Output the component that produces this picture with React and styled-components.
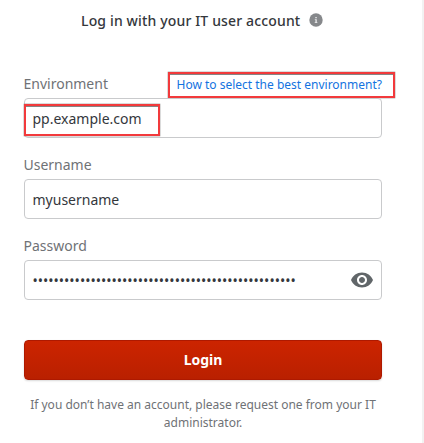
import React from "react";
import styled, { createGlobalStyle } from "styled-components";

const GlobalStyle = createGlobalStyle`
  *, *::before, *::after { box-sizing: border-box; }
  body { margin: 0; background: #fff; overflow: hidden; }
  body, input, button { font-family: "Noto Sans", sans-serif; }
`;

const Panel = styled.main`
  width: 424px;
  height: 443px;
  padding: 11px 40px 0 24px;
  border-right: 2px solid #f2f2f2;
  background: #fff;
`;

const Header = styled.header`
  display: flex;
  align-items: center;
  height: 20px;
  margin-bottom: 43px;
  padding-left: 57px;
  gap: 9px;
`;

const Title = styled.h1`
  margin: 0;
  color: #34373c;
  font-size: 14px;
  font-weight: 500;
  letter-spacing: 0.15px;
  line-height: 20px;
  white-space: nowrap;
`;

const InfoIcon = styled.svg`
  width: 14px;
  height: 14px;
  flex: none;
  margin-top: -2px;
`;

const Field = styled.div`
  width: 358px;
  margin-bottom: 17px;
`;

const FieldHead = styled.div`
  position: relative;
  height: 24px;
`;

const Label = styled.label`
  display: block;
  margin-left: -0.5px;
  color: #6f7276;
  font-size: 14px;
  line-height: 20px;
`;

const HelpLink = styled.a`
  position: absolute;
  top: -2px;
  left: 144px;
  width: 227px;
  height: 26px;
  padding-left: 6.5px;
  border: 2px solid #f23a3c;
  box-shadow: inset 0 1px 0 #858585, 0 0 0 0.3px #858585;
  color: #1373e0;
  font-size: 12px;
  line-height: 21px;
  text-decoration: none;
  white-space: nowrap;
`;

const InputBox = styled.div`
  position: relative;
  display: flex;
  align-items: center;
  height: 40px;
  padding: 0 7px 0 7.5px;
  border: 1px solid #c9cacc;
  border-radius: 4px;
  background: #fff;
`;

const Input = styled.input`
  flex: 1;
  min-width: 0;
  height: 36px;
  padding: 0;
  border: 0;
  outline: 0;
  background: transparent;
  color: #34373c;
  font-size: 14px;
`;

const Highlight = styled.span`
  position: absolute;
  top: 5px;
  left: -1px;
  width: 136px;
  height: 32px;
  border: 2px solid #f23a3c;
  box-shadow: inset 0 1px 0 #858585, 0 0 0 0.3px #858585;
  pointer-events: none;
`;

const EyeButton = styled.button`
  display: flex;
  flex: none;
  padding: 0;
  border: 0;
  background: transparent;
  color: #616669;
`;

const LoginButton = styled.button`
  display: block;
  width: 358px;
  height: 40px;
  margin-top: 40px;
  padding: 0 0 1px;
  border: 1px solid #ae1900;
  border-radius: 4px;
  background: linear-gradient(#cc2400, #b92000);
  box-shadow: 0 1px 2px rgba(0, 0, 0, 0.15);
  color: #fff;
  font-size: 14px;
  font-weight: 700;
`;

const Note = styled.p`
  width: 358px;
  margin: 16px 0 0;
  color: #6f7276;
  font-size: 12px;
  line-height: 18px;
  text-align: center;
`;

export default function App() {
  return (
    <>
      <GlobalStyle />
      <Panel>
        <Header>
          <Title>Log in with your IT user account</Title>
          <InfoIcon viewBox="0 0 14 14">
            <circle cx="7" cy="7" r="6.7" fill="#86888b" />
            <path d="M6.3 4h1.5v1.3H6.3zM5.8 6.3h2v3h.6v.7H5.7v-.7h.7V7h-.6z" fill="#e6e7e8" />
          </InfoIcon>
        </Header>
        <Field>
          <FieldHead>
            <Label htmlFor="environment">Environment</Label>
            <HelpLink>How to select the best environment?</HelpLink>
          </FieldHead>
          <InputBox>
            <Input id="environment" defaultValue="pp.example.com" />
            <Highlight />
          </InputBox>
        </Field>
        <Field>
          <FieldHead>
            <Label htmlFor="username">Username</Label>
          </FieldHead>
          <InputBox>
            <Input id="username" defaultValue="myusername" />
          </InputBox>
        </Field>
        <Field>
          <FieldHead>
            <Label htmlFor="password">Password</Label>
          </FieldHead>
          <InputBox>
            <Input id="password" type="password" defaultValue={"x".repeat(50)} />
            <EyeButton type="button" aria-label="Show password">
              <svg width="24" height="24" viewBox="0 0 24 24" fill="currentColor">
                <path d="M12 4.5C7 4.5 2.73 7.61 1 12c1.73 4.39 6 7.5 11 7.5s9.27-3.11 11-7.5c-1.73-4.39-6-7.5-11-7.5zM12 17c-2.76 0-5-2.24-5-5s2.24-5 5-5 5 2.24 5 5-2.24 5-5 5zm0-8c-1.66 0-3 1.34-3 3s1.34 3 3 3 3-1.34 3-3-1.34-3-3-3z" />
              </svg>
            </EyeButton>
          </InputBox>
        </Field>
        <LoginButton type="button">Login</LoginButton>
        <Note>If you don’t have an account, please request one from your IT administrator.</Note>
      </Panel>
    </>
  );
}
